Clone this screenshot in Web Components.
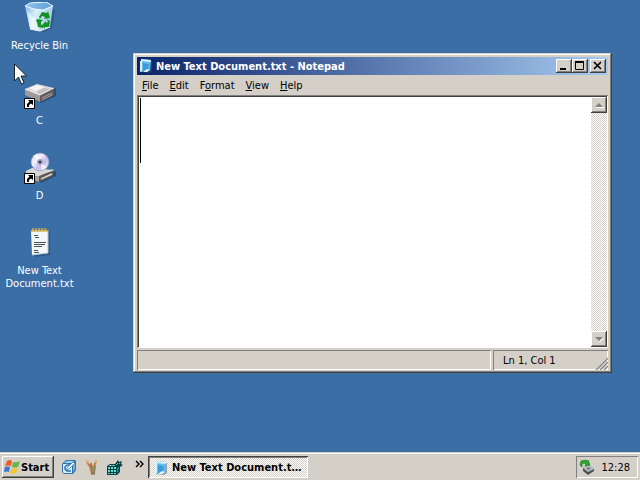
<!DOCTYPE html>
<html lang="en">
<head>
<meta charset="utf-8">
<meta name="viewport" content="width=device-width, initial-scale=1">
<title>Desktop</title>
<style>
  html, body { height: 100%; }
  body {
    margin: 0;
    overflow: hidden;
    color: #000;
    font: 11px/13px "DejaVu Sans Condensed", "DejaVu Sans", sans-serif;
    --face: #d4d0c8;
    --desktop: #3a6ea5;
    --raised: inset -1px -1px #404040, inset 1px 1px #fff, inset -2px -2px #808080;
    --sunken: inset 1px 1px #808080, inset -1px -1px #fff;
    --dither: repeating-conic-gradient(#fff 0 25%, #d4d0c8 0 50%) 0 0 / 2px 2px;
  }
</style>
</head>
<body>
<desk-top>
  <desktop-icon icon="bin">Recycle Bin</desktop-icon>
  <desktop-icon icon="drive" shortcut>C</desktop-icon>
  <desktop-icon icon="cd" shortcut>D</desktop-icon>
  <desktop-icon icon="text">New Text Document.txt</desktop-icon>

  <notepad-window slot="window">
    <title-bar slot="title">New Text Document.txt - Notepad</title-bar>
    <menu-bar slot="menu" items="File:0,Edit:0,Format:1,View:0,Help:0"></menu-bar>
    <text-area slot="body"></text-area>
    <status-bar slot="status">Ln 1, Col 1</status-bar>
  </notepad-window>

  <mouse-pointer slot="pointer"></mouse-pointer>

  <task-bar slot="taskbar">
    <quick-launch slot="launch"></quick-launch>
    <task-button slot="tasks">New Text Document.txt - Notepad</task-button>
    <system-tray slot="tray">12:28</system-tray>
  </task-bar>
</desk-top>

<script>
const icons = {
  bin: `<svg viewBox="0 0 32 32" width="32" height="32">
    <defs>
      <linearGradient id="b" x2="1" y2=".3"><stop stop-color="#7fb4e6"/><stop offset=".45" stop-color="#d9eff8"/><stop offset="1" stop-color="#a5cfe8"/></linearGradient>
      <linearGradient id="r" x2="1"><stop stop-color="#8fc0ea"/><stop offset="1" stop-color="#5f9fd8"/></linearGradient>
    </defs>
    <path d="M28 7l3 1-3 18-11 5z" fill="#23486f" opacity=".5"/>
    <path d="M1 4l5-3 16-1 7 4-3 21-10 4-10-2z" fill="url(#b)"/>
    <path d="M1 4l5-3 16-1 7 4-9 4-9-1z" fill="url(#r)"/>
    <path d="M1 4l9 3 9 1 10-4-7-4L6 1z" fill="none" stroke="#e9faff"/>
    <path d="M3 9l3 17 9 2-3-10z" fill="#f2fbfd" opacity=".6"/>
    <path d="M6 27l10 2 10-4" fill="none" stroke="#f0fafd"/>
    <g fill="#159321">
      <path d="M15 15l3-5 5 1 1-2 2 7-6 1 1-2-3-1-2 3z"/>
      <path d="M13 17l6 1-2 2v3h2v3l-5-1-1-5-1-1z"/>
      <path d="M23 17l3 2-1 6h-4v2l-3-4 4-4v2l2-1z"/>
    </g></svg>`,
  drive: `<svg viewBox="0 0 32 32" width="32" height="32">
    <path d="M2 18l15 8 15-7v-7l-3-2z" fill="#1e3555" opacity=".55"/>
    <path d="M1 12l15 6v7L1 18z" fill="#a29a99"/>
    <path d="M16 18l14-7v7l-14 7z" fill="#625b5c"/>
    <path d="M1 12L13 7l17 4-14 7z" fill="#dedada"/>
    <path d="M5 11l8-3 7 2-8 4z" fill="#f7f5f3"/>
    <path d="M12 15l8-4 7 1-11 5z" fill="#c4bdbd"/>
    <path d="M1 12l15 6 14-7" fill="none" stroke="#fff" stroke-width=".8"/>
    <path d="M18 21l10-5M18 23l10-5" stroke="#aaa2a0"/>
    <path d="M27 17h2" stroke="#4c9840"/></svg>`,
  cd: `<svg viewBox="0 0 32 32" width="32" height="32">
    <defs><linearGradient id="c" x2="1" y2="1"><stop stop-color="#bfc4e5"/><stop offset=".35" stop-color="#f5f2ff"/><stop offset=".6" stop-color="#c5bce8"/><stop offset="1" stop-color="#e9edff"/></linearGradient></defs>
    <path d="M4 22l13 9 15-7v-5z" fill="#1e3555" opacity=".55"/>
    <path d="M2 19l6-3 22 2-14 7-14-3z" fill="#dbd7d3"/>
    <path d="M2 21l13 4v5L2 25z" fill="#aaa4a0"/>
    <path d="M15 24l14-6v6l-14 6z" fill="#5d5959"/>
    <path d="M13 23l16-5M17 27l11-5" stroke="#d8d6cf" stroke-width="1.4"/>
    <circle cx="16" cy="10" r="9" fill="url(#c)" stroke="#8993bc" stroke-width=".6"/>
    <path d="M16 10L9 4l4-2zM16 10l7 5-5 3z" fill="#fff" opacity=".7"/>
    <circle cx="16" cy="10" r="3" fill="#a4a5bd"/>
    <circle cx="16" cy="10" r="1.3" fill="#262c54"/></svg>`,
  text: `<svg viewBox="0 0 32 32" width="32" height="32">
    <path d="M8 4h18v24l-15 2z" fill="#233f66" opacity=".5"/>
    <path d="M7 3h17v23l-16 2z" fill="#f4f8fa"/>
    <path d="M24 3v23L8 28" fill="none" stroke="#b3c7d6"/>
    <path d="M7 3h17v2H7z" fill="#dfc477"/>
    <path d="M8 1v3m3-3v3m3-3v3m3-3v3m3-3v3m3-3v3" stroke="#94732d"/>
    <path d="M9 1v3m3-3v3m3-3v3m3-3v3m3-3v3" stroke="#e8ca73"/>
    <path d="M10 8.5h4m-3 2h4m-5 5h12m-12 2h11m-11 2h8m-8 4h4m-4 2h5" stroke="#4c5255"/></svg>`,
  shortcut: `<svg class="badge" viewBox="0 0 11 11" width="11" height="11">
    <path d="M.5.5h10v10H.5z" fill="#fff" stroke="#000"/>
    <path d="M4 2h5v5L7 5.500 5 7v2H3V6l2.500-2.500z" fill="#000"/></svg>`,
  notepad: `<svg viewBox="0 0 16 16" width="16" height="16">
    <path d="M3 2l11 1v10l-3 2-8-1z" fill="#315a80" opacity=".5"/>
    <path d="M3 1l10 1-1 10-9 2-1-1z" fill="#69bce9"/>
    <path d="M3 1l10 1v2L3 3z" fill="#cdeffb"/>
    <path d="M2 3h2v10l-2 1z" fill="#d9f3fb"/>
    <path d="M5 5l6 1-1 6-5 1z" fill="#3b9cdd"/>
    <path d="M12 12l-3 2H5l4-3z" fill="#e3f5fc"/></svg>`,
  flag: `<svg viewBox="0 0 16 16" width="16" height="16">
    <path d="M3 2q3-2 5 0L7 7Q5 6 1 7z" fill="#ee5b2b"/>
    <path d="M9 3q3 1 7-1l-2 6q-3 1-6 0z" fill="#65b744"/>
    <path d="M1 8q3-1 5 0l-1 5q-2-1-5 0z" fill="#3b76d8"/>
    <path d="M8 9q2 1 6 0l-2 5q-3 1-6 0z" fill="#f5c42a"/></svg>`,
  showDesktop: `<svg viewBox="0 0 16 16" width="16" height="16">
    <path d="M2 4l3-3h9l1 1v9l-3 4H3l-2-2V5z" fill="#2f74b5"/>
    <path d="M2 5h9v9H3l-1-1z" fill="#d8f0fb"/>
    <path d="M3 4l3-2h7l-2 2z" fill="#9fd0ee"/>
    <path d="M12 5l2-2v7l-2 3z" fill="#73b1df"/>
    <path d="M10 6H6L4 8v2l2 2h4" fill="none" stroke="#2a72b4" stroke-width="1.500"/>
    <path d="M6 9l6-6 2 1-6 6-2 1z" fill="#fff" stroke="#2a6ca5" stroke-width=".7"/></svg>`,
  tools: `<svg viewBox="0 0 16 16" width="16" height="16">
    <path d="M5 7h7l-1 8H7z" fill="#a88a60"/>
    <path d="M7 9L3 3M8 8L7 4M10 8l2-6" stroke="#b5834b" stroke-width="2"/>
    <path d="M2 1l3 3M12 1v3" stroke="#dfb36b" stroke-width="2"/>
    <path d="M6 5l2 4M8 10v4" stroke="#c95a35"/>
    <path d="M11 7l-1 7" stroke="#6f8d5c"/>
    <path d="M7 15h4" stroke="#6d5a45"/></svg>`,
  cube: `<svg viewBox="0 0 16 16" width="16" height="16">
    <path d="M0 7l3-2h5l3-4 1 2 3-1-1 3 2 1-3 2v5l-3 3H0z" fill="#0b3f40"/>
    <path d="M1 8h2v2H1zm3 0h2v2H4zm3 0h2v2H7zm-6 3h2v2H1zm3 0h2v2H4zm3 0h2v2H7zm-6 3h2v1H1zm3 0h2v1H4zm3 0h2v1H7z" fill="#5be3da"/>
    <path d="M3 6h2L4 7H2zm3 0h2L7 7H5z" fill="#a6f7ef"/>
    <path d="M10 9l2-1v2l-2 1zm0 3l2-1v1l-2 2z" fill="#249c95"/>
    <path d="M9 6l2-2M12 5l1-1" stroke="#4fd0c8"/></svg>`,
  eject: `<svg viewBox="0 0 16 16" width="16" height="16">
    <path d="M4 9l6-3 5 4v2l-6 4-5-4z" fill="#4b5057"/>
    <path d="M4 9l6-3 5 4-6 3z" fill="#bcc0c5"/>
    <path d="M7 9l3-1 2 2-3 1z" fill="#777d85"/>
    <path d="M2 2l5-1 2 2V1l2 5-5 1 1-2-2-1-2 1v3L1 6z" fill="#29a82e" stroke="#137319" stroke-width=".6"/></svg>`,
};

// Attaches an open shadow root holding the given styles and markup.
function render(el, css, html) {
  const template = document.createElement('template');
  template.innerHTML = `<style>
    * { box-sizing: border-box; }
    svg { display: block; flex: none; }
    button { font: inherit; color: inherit; border: 0; padding: 0; margin: 0; background: var(--face); }
    ${css}
  </style>${html}`;
  el.attachShadow({ mode: 'open' }).appendChild(template.content.cloneNode(true));
}

class DeskTop extends HTMLElement {
  constructor() {
    super();
    render(this, `
      :host { display: flex; flex-direction: column; height: 100vh; background: var(--desktop); }
      main { flex: 1; min-height: 0; position: relative; }
      .icons { display: grid; grid-auto-rows: 75px; width: 79px; padding: 2px; }
    `, `
      <main>
        <div class="icons"><slot></slot></div>
        <slot name="window"></slot>
        <slot name="pointer"></slot>
      </main>
      <slot name="taskbar"></slot>
    `);
  }
}

class DesktopIcon extends HTMLElement {
  constructor() {
    super();
    const badge = this.hasAttribute('shortcut') ? icons.shortcut : '';
    render(this, `
      :host { display: block; color: #fff; text-align: center; }
      .picture { position: relative; width: 32px; margin: 0 auto 5px; }
      .badge { position: absolute; left: 0; bottom: 0; }
    `, `
      <div class="picture">${icons[this.getAttribute('icon')]}${badge}</div>
      <slot></slot>
    `);
  }
}

class NotepadWindow extends HTMLElement {
  constructor() {
    super();
    render(this, `
      :host {
        position: absolute; left: 133px; right: 28px; top: 53px; height: 320px;
        box-sizing: border-box; display: flex; flex-direction: column; padding: 4px;
        background: var(--face);
        box-shadow: inset -1px -1px #404040, inset 1px 1px var(--face), inset -2px -2px #808080, inset 2px 2px #fff;
      }
    `, `
      <slot name="title"></slot>
      <slot name="menu"></slot>
      <slot name="body"></slot>
      <slot name="status"></slot>
    `);
  }
}

class TitleBar extends HTMLElement {
  constructor() {
    super();
    render(this, `
      :host {
        display: flex; align-items: center; height: 18px; padding: 0 2px 0 1px; color: #fff; font-weight: bold;
        background: linear-gradient(to right, #0a246a, #a6caf0);
      }
      .caption { flex: 1; margin-left: 2px; white-space: nowrap; overflow: hidden; }
      button { width: 16px; height: 14px; box-shadow: var(--raised); }
      .close { margin-left: 2px; }
      button path { fill: none; stroke: #000; }
    `, `
      ${icons.notepad}
      <span class="caption"><slot></slot></span>
      <button aria-label="Minimize"><svg viewBox="0 0 16 14"><path d="M4 10h6" stroke-width="2"/></svg></button>
      <button aria-label="Maximize"><svg viewBox="0 0 16 14"><path d="M3.500 3v7.500h8V3"/><path d="M3 3h9" stroke-width="2"/></svg></button>
      <button class="close" aria-label="Close"><svg viewBox="0 0 16 14"><path d="M4 3l7 7M11 3l-7 7" stroke-width="1.600"/></svg></button>
    `);
  }
}

class MenuBar extends HTMLElement {
  constructor() {
    super();
    const items = this.getAttribute('items').split(',').map((item) => {
      const [name, key] = item.split(':');
      const i = Number(key);
      return `<button>${name.slice(0, i)}<u>${name[i]}</u>${name.slice(i + 1)}</button>`;
    });
    render(this, `
      :host { display: block; }
      nav { display: flex; gap: 1px; height: 20px; }
      button { padding: 0 5px; }
      u { text-underline-offset: 1px; text-decoration-thickness: 1px; }
    `, `<nav>${items.join('')}</nav>`);
  }
}

class TextArea extends HTMLElement {
  constructor() {
    super();
    render(this, `
      :host {
        flex: 1; min-height: 0; display: flex; position: relative; padding: 2px 1px 1px 2px; background: #fff;
        box-shadow: inset 1px 1px #808080, inset -1px -1px #fff, inset 2px 2px #404040;
      }
      textarea { flex: 1; border: 0; padding: 1px; resize: none; outline: 0; background: #fff; overflow: hidden; }
      .caret { position: absolute; left: 3px; top: 3px; width: 1px; height: 65px; background: #000; }
      .scroll { display: flex; flex-direction: column; justify-content: space-between; width: 16px; background: var(--dither); }
      .scroll button { height: 16px; box-shadow: var(--raised); }
      .scroll path { fill: #808080; }
      .scroll .light { fill: #fff; }
    `, `
      <textarea aria-label="Document text" spellcheck="false"></textarea>
      <span class="caret"></span>
      <div class="scroll">
        <button aria-label="Scroll up"><svg viewBox="0 0 16 16"><path class="light" d="M5 10h8v1H5z"/><path d="M4 10l4-4 4 4z"/></svg></button>
        <button aria-label="Scroll down"><svg viewBox="0 0 16 16"><path class="light" d="M12 7h1l-4 4-1-1z"/><path d="M4 6h8l-4 4z"/></svg></button>
      </div>
    `);
  }
}

class StatusBar extends HTMLElement {
  constructor() {
    super();
    render(this, `
      :host { display: flex; gap: 2px; height: 20px; padding-top: 2px; margin-bottom: -1px; }
      div { display: flex; align-items: center; justify-content: space-between; box-shadow: var(--sunken); }
      .rest { flex: 1; }
      .position { width: 115px; padding-left: 10px; }
      svg { align-self: flex-end; }
    `, `
      <div class="rest"></div>
      <div class="position">
        <slot></slot>
        <svg viewBox="0 0 13 13" width="13" height="13">
          <path d="M0 13L13 0M4 13l9-9M8 13l5-5" stroke="#fff"/>
          <path d="M1 13L13 1M5 13l8-8M9 13l4-4" stroke="#808080" stroke-width="1.400"/>
        </svg>
      </div>
    `);
  }
}

class MousePointer extends HTMLElement {
  constructor() {
    super();
    render(this, `
      :host { position: absolute; left: 14px; top: 63px; }
    `, `
      <svg viewBox="0 0 13 22" width="13" height="22">
        <path d="M.5 1v17l4-4 3 7 2.500-1-3-7h5.500z" fill="#fff" stroke="#000" stroke-width=".8"/>
      </svg>
    `);
  }
}

class TaskBar extends HTMLElement {
  constructor() {
    super();
    render(this, `
      :host {
        display: flex; align-items: center; height: 28px; padding: 3px 2px 1px; box-sizing: border-box;
        background: var(--face); box-shadow: inset 0 1px var(--face), inset 0 2px #fff;
      }
      .start {
        display: flex; align-items: center; gap: 1px; width: 52px; height: 22px; padding: 0 3px 0 2px;
        font-weight: bold; box-shadow: var(--raised);
      }
      .tasks { flex: 1; min-width: 0; }
    `, `
      <button class="start">${icons.flag}Start</button>
      <slot name="launch"></slot>
      <div class="tasks"><slot name="tasks"></slot></div>
      <slot name="tray"></slot>
    `);
  }
}

class QuickLaunch extends HTMLElement {
  constructor() {
    super();
    render(this, `
      :host { display: flex; align-items: center; gap: 7px; padding: 0 2px 0 7px; }
      .more { width: 16px; height: 22px; }
      .more path { fill: none; stroke: #000; stroke-width: 1.400; }
    `, `
      <button aria-label="Show Desktop">${icons.showDesktop}</button>
      <button aria-label="Tools">${icons.tools}</button>
      <button aria-label="Registry Editor">${icons.cube}</button>
      <button class="more" aria-label="More"><svg viewBox="0 0 16 22"><path d="M6 5l3 3-3 3M10 5l3 3-3 3"/></svg></button>
    `);
  }
}

class TaskButton extends HTMLElement {
  constructor() {
    super();
    render(this, `
      :host { display: block; max-width: 160px; }
      button {
        display: flex; align-items: center; gap: 3px; width: 100%; height: 22px; padding: 1px 4px 0 5px;
        font-weight: bold; background: var(--dither);
        box-shadow: inset 1px 1px #404040, inset -1px -1px #fff, inset 2px 2px #808080;
      }
      span { overflow: hidden; text-overflow: ellipsis; white-space: nowrap; }
    `, `<button aria-pressed="true">${icons.notepad}<span><slot></slot></span></button>`);
  }
}

class SystemTray extends HTMLElement {
  constructor() {
    super();
    render(this, `
      :host {
        display: flex; align-items: center; gap: 6px; height: 22px; padding: 0 8px 0 3px;
        box-sizing: border-box; box-shadow: var(--sunken);
      }
    `, `${icons.eject}<slot></slot>`);
  }
}

customElements.define('desk-top', DeskTop);
customElements.define('desktop-icon', DesktopIcon);
customElements.define('notepad-window', NotepadWindow);
customElements.define('title-bar', TitleBar);
customElements.define('menu-bar', MenuBar);
customElements.define('text-area', TextArea);
customElements.define('status-bar', StatusBar);
customElements.define('mouse-pointer', MousePointer);
customElements.define('task-bar', TaskBar);
customElements.define('quick-launch', QuickLaunch);
customElements.define('task-button', TaskButton);
customElements.define('system-tray', SystemTray);
</script>
</body>
</html>
